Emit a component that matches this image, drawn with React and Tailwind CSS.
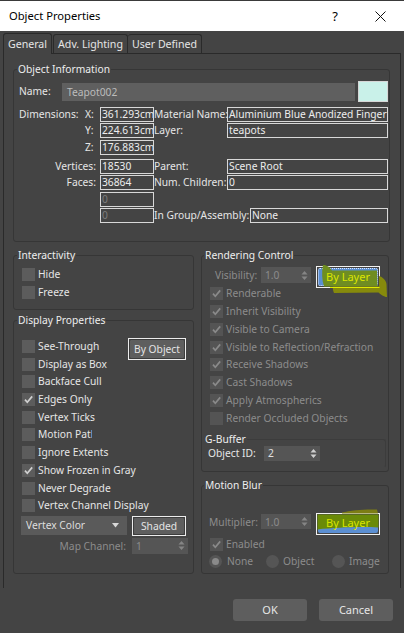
import React from "react";

const T = "text-[#e6e6e6]";
const D = "text-[#8c8c8c]";

function Group({ title, className = "", titleLeft = "left-[3px]", border = "border-[#363636]", children }) {
  return (
    <div className={`relative border ${border} rounded-[3px] ${className}`}>
      <span className={`absolute ${titleLeft} top-[-9px] px-[1px] bg-[#444444] leading-[16px] text-[#eeeeee] whitespace-nowrap`}>
        {title}
      </span>
      {children}
    </div>
  );
}

function Check({ checked, dim }) {
  return (
    <span className={`w-[13px] h-[13px] shrink-0 flex items-center justify-center ${dim ? "bg-[#545454]" : "bg-[#5c5c5c]"}`}>
      {checked && (
        <svg width="11" height="11" viewBox="0 0 11 11">
          <path d="M2 5.6 L4.3 8.2 L9.2 2.4" fill="none" stroke={dim ? "#8a8a8a" : "#d0d0d0"} strokeWidth="1.7" />
        </svg>
      )}
    </span>
  );
}

function CbRow({ label, checked, dim, h, labelClass = "" }) {
  return (
    <div className={`flex items-start gap-[3px] ${h}`}>
      <Check checked={checked} dim={dim} />
      <span className={`leading-[13px] whitespace-nowrap ${dim ? D : T} ${labelClass}`}>{label}</span>
    </div>
  );
}

function Arrows({ dim }) {
  return (
    <svg width="7" height="11" viewBox="0 0 7 11" className="shrink-0">
      <path d="M3.5 1 L6.5 4.5 H0.5 Z M3.5 10 L6.5 6.5 H0.5 Z" fill={dim ? "#858585" : "#cfcfcf"} />
    </svg>
  );
}

function Spinner({ value, w, h, dim }) {
  return (
    <div className={`flex items-center justify-between bg-[#555555] ${w} ${h} pl-[4px] pr-[3px]`}>
      <span className={`leading-[14px] ${dim ? D : "text-[#e0e0e0]"}`}>{value}</span>
      <Arrows dim={dim} />
    </div>
  );
}

function Box({ children, w, dim }) {
  return (
    <div
      className={`${w} h-[15px] shrink-0 border border-[#d8d8d8] leading-[13px] pl-[1px] overflow-hidden whitespace-nowrap ${
        dim ? "text-[#7c7c7c]" : "text-[#ededed]"
      }`}
    >
      {children}
    </div>
  );
}

function Btn({ children, w, h, focus }) {
  return (
    <div className={`${w} ${h} shrink-0 ${focus ? "border border-[#ececec]" : ""}`}>
      <div className="w-full h-full rounded-[2px] bg-[#5e5e5e] border border-[#3c3c3c] flex items-center justify-center text-[#e4e4e4] leading-[14px]">
        {children}
      </div>
    </div>
  );
}

function Radio({ sel }) {
  return (
    <span className="w-[13px] h-[13px] rounded-full bg-[#555555] flex items-center justify-center shrink-0">
      {sel && <span className="w-[7px] h-[7px] rounded-full bg-[#8a8a8a]" />}
    </span>
  );
}

function ByLayerRC() {
  return (
    <div className="relative w-[64px] h-[22px] shrink-0 border border-[#f2f2f2] p-[1px]">
      <div className="w-full h-full rounded-[2px] bg-[#5b8fd2] border border-dotted border-[#dfe8ff]" />
      <svg className="absolute left-[-1px] top-[-1px] overflow-visible" width="64" height="22" viewBox="0 0 64 22">
        <path d="M7 -1 C10 -1.5 14 1 16 4.5 L61 4.5 L61.5 20.5 L8 20.5 C6 14 5.5 6 7 -1 Z" fill="#6f8d22" />
        <path
          d="M17 20.5 L63 20.5 L63 10 C66.5 11 70 14 70.5 18 L71 31 C68 31 64.5 28.5 62.5 26.5 L18 27 C17 24.5 16.5 22.5 17 20.5 Z"
          fill="#868a0c"
        />
        <path d="M14 21.5 H63.5" stroke="#e0ea00" strokeWidth="1" />
      </svg>
      <span className="absolute inset-0 flex items-center justify-center text-[#dce600] leading-[14px] text-[11px]">By Layer</span>
    </div>
  );
}

function ByLayerMB() {
  return (
    <div className="relative w-[64px] h-[22px] shrink-0 border border-[#f2f2f2] p-[1px]">
      <div className="w-full h-full rounded-[2px] bg-[#5b8fd2]" />
      <svg className="absolute left-[-1px] top-[-1px] overflow-visible" width="64" height="22" viewBox="0 0 64 22">
        <path d="M1.5 1.5 H62.5 V14.5 C45 13.5 20 14.5 1.5 16.5 Z" fill="#6a8a08" />
        <path d="M26 -0.5 C35 -3 50 -4 61 -3.5 L62 0.5 L26 0.5 Z" fill="#7c7d14" />
      </svg>
      <span className="absolute inset-0 flex items-center justify-center pb-[3px] text-[#d8e400] leading-[14px] text-[11px]">By Layer</span>
    </div>
  );
}

export default function App() {
  const rowD = "h-[17.7px]";
  const rowR = "h-[17.86px]";
  return (
    <div className="w-[404px] h-[633px] bg-[#444444] overflow-hidden text-[10.25px] font-['Noto_Sans','Liberation_Sans',sans-serif]">
      {/* Title bar */}
      <div className="h-[31px] bg-white border-t border-[#3a3a3a] flex items-center pl-[9px] pr-[18px] text-black">
        <span className="leading-[16px] text-[11.2px]">Object Properties</span>
        <span className="ml-auto mr-[37px] text-[13px] leading-[16px]">?</span>
        <svg width="11" height="11" viewBox="0 0 11 11">
          <path d="M0.5 0.5 L10.5 10.5 M10.5 0.5 L0.5 10.5" stroke="#111" strokeWidth="1" />
        </svg>
      </div>

      {/* Tabs */}
      <div className="h-[22px] flex items-end pl-[3px] text-[#e6e6e6] text-[10.6px]">
        <div className="relative z-10 -mb-px w-[49px] h-[21px] border border-b-0 border-[#2a2a2a] rounded-t-[3px] bg-[#444444] flex items-center justify-center leading-[14px]">
          General
        </div>
        <div className="ml-px w-[75px] h-[19px] border border-b-0 border-[#2a2a2a] rounded-t-[3px] flex items-center justify-center leading-[14px]">
          Adv. Lighting
        </div>
        <div className="w-[74px] h-[19px] border border-b-0 border-l-0 border-[#2a2a2a] rounded-t-[3px] flex items-center justify-center leading-[14px]">
          User Defined
        </div>
      </div>

      {/* Panel */}
      <div className="mx-[3px] h-[535px] border border-b-0 border-[#2a2a2a] pl-[9px] pt-[15px]">
        {/* Object Information */}
        <Group title="Object Information" className="w-[377px] h-[173px]">
          <div className={`pl-[5px] pt-[11px] ${T}`}>
            <div className="flex items-center h-[21px]">
              <span className="w-[43px] shrink-0">Name:</span>
              <div className="w-[293px] h-[18px] bg-[#5f5f5f] text-[#bcbcbc] pl-[5px] leading-[18px]">Teapot002</div>
              <div className="ml-[3px] w-[30px] h-[21px] bg-[#c9f1e9] border border-[#d6d6d6]" />
            </div>

            <div className="mt-[5px] flex items-center h-[15px]">
              <span className="w-[66px] shrink-0 leading-[15px]">Dimensions:</span>
              <span className="w-[15px] shrink-0 leading-[15px]">X:</span>
              <Box w="w-[54px]">361.293cm</Box>
              <span className="w-[73px] shrink-0 whitespace-nowrap overflow-hidden leading-[15px]">Material Name:</span>
              <Box w="w-[161px]">Aluminium Blue Anodized Fingerprint</Box>
            </div>
            <div className="mt-[1px] flex items-center h-[15px]">
              <span className="w-[66px] shrink-0" />
              <span className="w-[15px] shrink-0 leading-[15px]">Y:</span>
              <Box w="w-[54px]">224.613cm</Box>
              <span className="w-[73px] shrink-0 leading-[15px]">Layer:</span>
              <Box w="w-[161px]">teapots</Box>
            </div>
            <div className="mt-[2px] flex items-center h-[15px]">
              <span className="w-[66px] shrink-0" />
              <span className="w-[15px] shrink-0 leading-[15px]">Z:</span>
              <Box w="w-[54px]">176.883cm</Box>
            </div>

            <div className="mt-[4px] flex items-center h-[15px]">
              <span className="w-[81px] shrink-0 text-right pr-[4px] leading-[15px]">Vertices:</span>
              <Box w="w-[54px]">18530</Box>
              <span className="w-[73px] shrink-0 leading-[15px]">Parent:</span>
              <Box w="w-[161px]">Scene Root</Box>
            </div>
            <div className="mt-[1px] flex items-center h-[15px]">
              <span className="w-[81px] shrink-0 text-right pr-[4px] leading-[15px]">Faces:</span>
              <Box w="w-[54px]">36864</Box>
              <span className="w-[73px] shrink-0 whitespace-nowrap overflow-hidden leading-[15px]">Num. Children:</span>
              <Box w="w-[161px]">0</Box>
            </div>
            <div className="mt-[2px] flex items-center h-[15px]">
              <span className="w-[81px] shrink-0" />
              <Box w="w-[54px]" dim>0</Box>
            </div>
            <div className="mt-[1px] flex items-center h-[15px]">
              <span className="w-[81px] shrink-0" />
              <Box w="w-[54px]" dim>0</Box>
              <span className="w-[96px] shrink-0 whitespace-nowrap overflow-hidden leading-[15px]">In Group/Assembly:</span>
              <Box w="w-[138px]">None</Box>
            </div>
          </div>
        </Group>

        {/* Columns */}
        <div className="flex gap-[7px] mt-[13px]">
          {/* Left column */}
          <div className="w-[181px] shrink-0 flex flex-col">
            <Group title="Interactivity" className="h-[55px]">
              <div className="pl-[8px] pt-[12px] flex flex-col gap-[5px]">
                <CbRow label="Hide" />
                <CbRow label="Freeze" />
              </div>
            </Group>

            <Group title="Display Properties" className="mt-[10px] h-[254px]">
              <div className="pl-[8px] pt-[19px]">
                <div className="flex">
                  <div className="w-[106px] shrink-0 flex flex-col">
                    <CbRow h={rowD} label="See-Through" />
                    <CbRow h={rowD} label="Display as Box" />
                    <CbRow h={rowD} label="Backface Cull" />
                    <CbRow h={rowD} label="Edges Only" checked />
                    <CbRow h={rowD} label="Vertex Ticks" />
                    <CbRow h={rowD} label="Motion Path" labelClass="w-[54px] overflow-hidden" />
                    <CbRow h={rowD} label="Ignore Extents" />
                    <CbRow h={rowD} label="Show Frozen in Gray" checked />
                    <CbRow h={rowD} label="Never Degrade" />
                    <CbRow h={rowD} label="Vertex Channel Display" />
                  </div>
                  <div className="-mt-[2px]">
                    <Btn w="w-[58px]" h="h-[22px]" focus>
                      By Object
                    </Btn>
                  </div>
                </div>

                <div className="-mt-[1px] -ml-[1px] flex items-start">
                  <div className="w-[106px] h-[19px] bg-[#5a5a5a] flex items-center pl-[5px] pr-[8px] text-[#dedede] leading-[14px]">
                    <span>Vertex Color</span>
                    <svg className="ml-auto" width="7" height="5" viewBox="0 0 7 5">
                      <path d="M0 0 H7 L3.5 4.5 Z" fill="#d8d8d8" />
                    </svg>
                  </div>
                  <div className="ml-[5px]">
                    <Btn w="w-[54px]" h="h-[20px]" focus>
                      Shaded
                    </Btn>
                  </div>
                </div>

                <div className="mt-[2px] flex items-center">
                  <span className={`w-[110px] shrink-0 text-right pr-[6px] leading-[16px] ${D}`}>Map Channel:</span>
                  <Spinner value="1" w="w-[56px]" h="h-[16px]" dim />
                </div>
              </div>
            </Group>
          </div>

          {/* Right column */}
          <div className="w-[188px] shrink-0 flex flex-col">
            <Group title="Rendering Control" titleLeft="left-[2px]" className="h-[217px]">
              <div className="pt-[10px]">
                <div className="flex items-start h-[22px] pl-[13px]">
                  <span className={`w-[46px] shrink-0 leading-[16px] mt-[1px] ${D}`}>Visibility:</span>
                  <div className="mt-[1px]">
                    <Spinner value="1.0" w="w-[50px]" h="h-[16px]" dim />
                  </div>
                  <div className="ml-[5px]">
                    <ByLayerRC />
                  </div>
                </div>
                <div className="pl-[8px] -mt-[1px] flex flex-col">
                  <CbRow h={rowR} dim checked label="Renderable" />
                  <CbRow h={rowR} dim checked label="Inherit Visibility" />
                  <CbRow h={rowR} dim checked label="Visible to Camera" />
                  <CbRow h={rowR} dim checked label="Visible to Reflection/Refraction" />
                  <CbRow h={rowR} dim checked label="Receive Shadows" />
                  <CbRow h={rowR} dim checked label="Cast Shadows" />
                  <CbRow h={rowR} dim checked label="Apply Atmospherics" />
                  <CbRow h={rowR} dim label="Render Occluded Objects" />
                </div>
                <div className="mt-[9px] ml-[1px] mr-[2px]">
                  <Group title="G-Buffer" titleLeft="left-[0px]" border="border-[#3c3c3c] border-l-transparent border-b-transparent" className="h-[29px]">
                    <div className="pt-[6px] pl-[4px] flex items-center">
                      <span className={`w-[56px] shrink-0 leading-[15px] ${T}`}>Object ID:</span>
                      <Spinner value="2" w="w-[56px]" h="h-[15px]" />
                    </div>
                  </Group>
                </div>
              </div>
            </Group>

            <Group title="Motion Blur" titleLeft="left-[2px]" className="mt-[13px] h-[89px]">
              <div className="pt-[27px]">
                <div className="flex items-start h-[22px] pl-[7px]">
                  <span className={`w-[52px] shrink-0 leading-[16px] mt-[1px] ${D}`}>Multiplier:</span>
                  <div className="mt-[1px]">
                    <Spinner value="1.0" w="w-[50px]" h="h-[15px]" dim />
                  </div>
                  <div className="ml-[5px]">
                    <ByLayerMB />
                  </div>
                </div>
                <div className="pl-[8px] mt-[3px]">
                  <CbRow dim checked label="Enabled" />
                </div>
                <div className="pl-[7px] mt-[3px] flex items-center h-[14px]">
                  <div className="w-[57px] shrink-0 flex items-center gap-[5px]">
                    <Radio sel />
                    <span className={`leading-[13px] ${D}`}>None</span>
                  </div>
                  <div className="w-[66px] shrink-0 flex items-center gap-[4px]">
                    <Radio />
                    <span className={`leading-[13px] ${D}`}>Object</span>
                  </div>
                  <div className="flex items-center gap-[4px]">
                    <Radio />
                    <span className={`leading-[13px] ${D}`}>Image</span>
                  </div>
                </div>
              </div>
            </Group>
          </div>
        </div>
      </div>

      {/* Bottom buttons */}
      <div className="mt-[11px] flex justify-end gap-[12px] pr-[11px]">
        <div className="w-[74px] h-[22px] rounded-[3px] bg-[#5e5e5e] flex items-center justify-center text-[#e6e6e6] leading-[14px] text-[11px]">
          OK
        </div>
        <div className="w-[74px] h-[22px] rounded-[3px] bg-[#5e5e5e] flex items-center justify-center text-[#e6e6e6] leading-[14px] text-[11px]">
          Cancel
        </div>
      </div>
    </div>
  );
}
